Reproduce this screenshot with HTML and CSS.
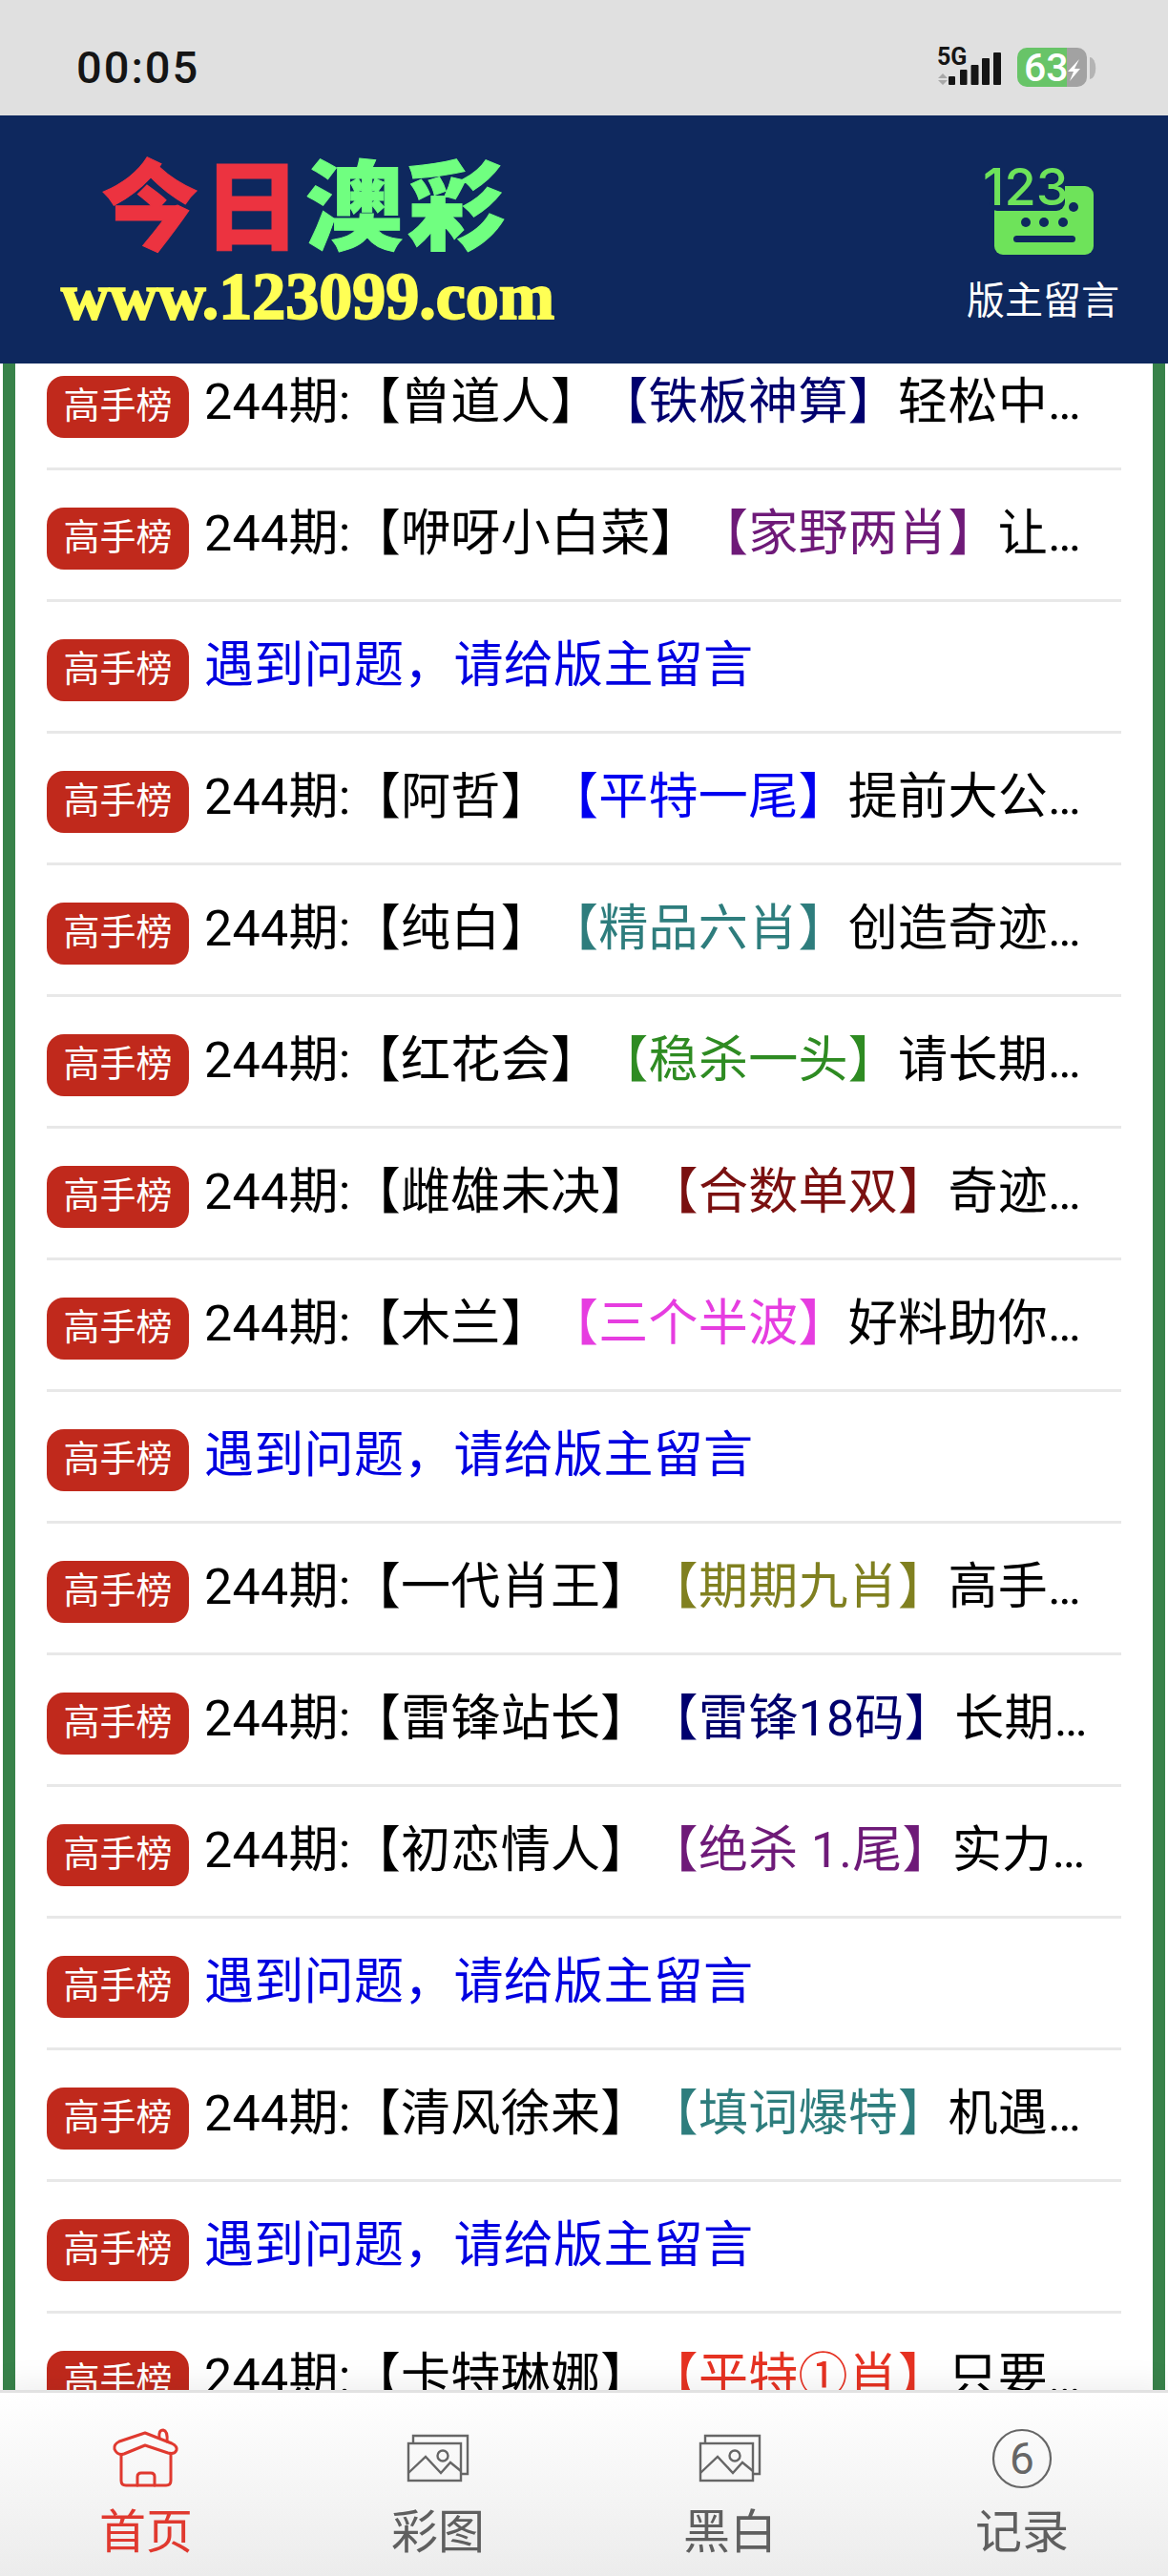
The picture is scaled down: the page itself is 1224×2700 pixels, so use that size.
FILE: index.html
```html
<!DOCTYPE html>
<html lang="zh-CN">
<head>
  <meta charset="UTF-8">
  <meta name="viewport" content="width=device-width, initial-scale=1.0">
  <title>今日澳彩</title>
  <link rel="stylesheet" href="styles.css">
</head>
<body>
  <div class="page">
    <div class="status-bar">
      <span class="time">00:05</span>
      <svg class="status-icons" width="170" height="50" viewBox="983 46 170 50">
        <text class="net-text" x="982" y="68">5G</text>
        <path d="M988 77l5 5h-10zM988 89l5-5h-10z" fill="#a8a8a8"/>
        <rect x="994" y="80" width="7" height="9" rx="1" fill="#151515"/>
        <rect x="1006" y="73" width="7.5" height="16" rx="1" fill="#151515"/>
        <rect x="1017.5" y="68" width="8" height="21" rx="1" fill="#151515"/>
        <rect x="1029" y="61" width="8" height="28" rx="1" fill="#151515"/>
        <rect x="1041" y="55" width="8" height="34" rx="1" fill="#151515"/>
        <path d="M1076 50h42v41h-42a10 10 0 0 1-10-10v-21a10 10 0 0 1 10-10z" fill="#68c468"/>
        <path d="M1118 50h11a10 10 0 0 1 10 10v21a10 10 0 0 1-10 10h-11z" fill="#a2a2a2"/>
        <path d="M1142 60a6 11 0 0 1 0 23z" fill="#b4b4b4"/>
        <text class="batt-text" x="1073" y="85">63</text>
        <path d="M1131 62l-12 13h6l-4 10 11-13h-6z" fill="#fff"/>
      </svg>
    </div>

    <header class="top">
      <div class="logo">
        <div class="logo-name"><span class="red">今日</span><span class="green">澳彩</span></div>
        <div class="logo-url">www.123099.com</div>
      </div>
      <a class="msg-link">
        <svg class="msg-icon" width="116" height="92" viewBox="1032 176 116 92">
          <rect x="1042" y="195" width="104" height="72" rx="9" fill="#6ee35a"/>
          <rect x="1036" y="170" width="80" height="51" rx="9" fill="#0e285e"/>
          <text class="kb-num" x="1030" y="215">123</text>
          <circle cx="1125" cy="217" r="5" fill="#0e285e"/>
          <circle cx="1075" cy="233" r="5" fill="#0e285e"/>
          <circle cx="1094" cy="233" r="5" fill="#0e285e"/>
          <circle cx="1114" cy="233" r="5" fill="#0e285e"/>
          <rect x="1062" y="247" width="65" height="7" rx="3.5" fill="#0e285e"/>
        </svg>
        <span class="msg-label">版主留言</span>
      </a>
    </header>

    <main class="list-wrap">
      <ul class="list">
        <li class="row"><span class="badge">高手榜</span><p class="txt">244期:【曾道人】<b class="navy">【铁板神算】</b>轻松中奖好运连连</p></li>
        <li class="row"><span class="badge">高手榜</span><p class="txt">244期:【咿呀小白菜】<b class="purple">【家野两肖】</b>让你赢钱不再难</p></li>
        <li class="row"><span class="badge">高手榜</span><p class="txt blue">遇到问题，请给版主留言</p></li>
        <li class="row"><span class="badge">高手榜</span><p class="txt">244期:【阿哲】<b class="pure-blue">【平特一尾】</b>提前大公开免费看</p></li>
        <li class="row"><span class="badge">高手榜</span><p class="txt">244期:【纯白】<b class="teal">【精品六肖】</b>创造奇迹赢大奖</p></li>
        <li class="row"><span class="badge">高手榜</span><p class="txt">244期:【红花会】<b class="green-t">【稳杀一头】</b>请长期关注本站</p></li>
        <li class="row"><span class="badge">高手榜</span><p class="txt">244期:【雌雄未决】<b class="maroon">【合数单双】</b>奇迹就在今天</p></li>
        <li class="row"><span class="badge">高手榜</span><p class="txt">244期:【木兰】<b class="magenta">【三个半波】</b>好料助你发大财</p></li>
        <li class="row"><span class="badge">高手榜</span><p class="txt blue">遇到问题，请给版主留言</p></li>
        <li class="row"><span class="badge">高手榜</span><p class="txt">244期:【一代肖王】<b class="olive">【期期九肖】</b>高手论坛精选</p></li>
        <li class="row"><span class="badge">高手榜</span><p class="txt">244期:【雷锋站长】<b class="navy">【雷锋18码】</b>长期跟踪必中</p></li>
        <li class="row"><span class="badge">高手榜</span><p class="txt">244期:【初恋情人】<b class="purple">【绝杀 1.尾】</b>实力派稳赚不赔</p></li>
        <li class="row"><span class="badge">高手榜</span><p class="txt blue">遇到问题，请给版主留言</p></li>
        <li class="row"><span class="badge">高手榜</span><p class="txt">244期:【清风徐来】<b class="teal">【填词爆特】</b>机遇就在眼前</p></li>
        <li class="row"><span class="badge">高手榜</span><p class="txt blue">遇到问题，请给版主留言</p></li>
        <li class="row"><span class="badge">高手榜</span><p class="txt">244期:【卡特琳娜】<b class="red-t">【平特①肖】</b>只要跟上就能赢</p></li>
      </ul>
    </main>

    <nav class="tabs">
      <a class="tab active">
        <svg width="120" height="90" viewBox="-7 0 120 90" fill="none" stroke="#e0392f" stroke-width="3" stroke-linejoin="round" stroke-linecap="round">
          <path d="M52 20L80 31Q86 34 85 38Q83 43 76 41L52 33L30 42Q23 44 20 37Q19 32 25 29Z"/>
          <path d="M27 43V70Q27 75 32 75H74Q79 75 79 70V42"/>
          <path d="M44 75V66Q44 62 48 62H58Q62 62 62 66V75"/>
          <path d="M67 25Q66 17 71 17Q76 18 75 29"/>
        </svg>
        <span>首页</span>
      </a>
      <a class="tab">
        <svg width="120" height="90" viewBox="-1 0 120 90" fill="none" stroke="#666" stroke-width="2.4">
          <path d="M33 31V23H90V63H84"/>
          <rect x="28" y="31" width="55" height="39"/>
          <circle cx="64" cy="44" r="5.5"/>
          <path d="M28 62L46 45L62 62L72 51L83 60"/>
        </svg>
        <span>彩图</span>
      </a>
      <a class="tab">
        <svg width="120" height="90" viewBox="-1 0 120 90" fill="none" stroke="#666" stroke-width="2.4">
          <path d="M33 31V23H90V63H84"/>
          <rect x="28" y="31" width="55" height="39"/>
          <circle cx="64" cy="44" r="5.5"/>
          <path d="M28 62L46 45L62 62L72 51L83 60"/>
        </svg>
        <span>黑白</span>
      </a>
      <a class="tab">
        <svg width="120" height="90" viewBox="0 0 120 90" fill="none" stroke="#666" stroke-width="2.2">
          <circle cx="60" cy="47" r="30"/>
          <text class="six" x="60" y="63">6</text>
        </svg>
        <span>记录</span>
      </a>
    </nav>
  </div>
</body>
</html>
```
FILE: styles.css
```css
* {
  box-sizing: border-box;
}
body {
  margin: 0;
  background: #fff;
  font-family: "Noto Sans CJK SC", "Noto Sans", sans-serif;
}
.page {
  width: 1224px;
  height: 2700px;
  display: flex;
  flex-direction: column;
  overflow: hidden;
}

/* status bar */
.status-bar {
  height: 121px;
  background: #e0e0e0;
  display: flex;
  justify-content: space-between;
  padding: 46px 71px 0 80px;
}
.time {
  font-family: Roboto, sans-serif;
  font-size: 47px;
  font-weight: 500;
  line-height: 50px;
  letter-spacing: 2px;
  color: #151515;
}
.net-text {
  font-family: Roboto, sans-serif;
  font-size: 25px;
  font-weight: 700;
  fill: #151515;
}
.batt-text {
  font-family: Roboto, sans-serif;
  font-size: 41px;
  font-weight: 500;
  fill: #fff;
}

/* header */
.top {
  height: 260px;
  background: #0e285e;
  display: flex;
  justify-content: space-between;
  padding: 0 51px 0 61px;
  position: relative;
  z-index: 2;
}
.logo {
  padding-top: 33px;
  filter: blur(0.5px);
}
.logo-name {
  font-size: 102px;
  font-weight: 900;
  line-height: 112px;
  letter-spacing: 5px;
  padding-left: 45px;
  -webkit-text-stroke: 1px currentColor;
}
.red {
  color: #ec3340;
}
.green {
  color: #70ff80;
}
.logo-url {
  margin-top: 7px;
  padding-left: 3px;
  font-family: "Liberation Serif", serif;
  font-size: 70px;
  font-weight: 700;
  line-height: 76px;
  color: #ffff55;
  -webkit-text-stroke: 2px #ffff55;
}
.msg-link {
  display: flex;
  flex-direction: column;
  align-items: center;
  padding-top: 55px;
}
.msg-icon {
  margin-right: 6px;
}
.kb-num {
  font-family: Inter, sans-serif;
  font-size: 54px;
  font-weight: 500;
  fill: #6ee35a;
}
.msg-label {
  margin-top: 15px;
  font-size: 40px;
  line-height: 58px;
  color: #fff;
}

/* list */
.list-wrap {
  flex: 1;
  min-height: 0;
  overflow: hidden;
  margin: 0 3px;
  border-left: 13px solid #38824a;
  border-right: 13px solid #38824a;
  background: #fff;
  padding: 0 33px;
}
.list {
  list-style: none;
  margin: -26px 0 0;
  padding: 0;
}
.row {
  height: 138px;
  display: flex;
  align-items: flex-start;
  padding-top: 39px;
  border-bottom: 3px solid #e8e8e8;
}
.badge {
  flex: none;
  width: 149px;
  height: 65px;
  margin-right: 16px;
  border-radius: 18px;
  background: #c0291c;
  color: #fff;
  font-size: 38px;
  line-height: 55px;
  text-align: center;
}
.txt {
  flex: 1;
  min-width: 0;
  margin: -7px 25px 0 0;
  font-family: Roboto, "Noto Sans CJK SC", sans-serif;
  font-size: 52px;
  line-height: 70px;
  letter-spacing: 0.3px;
  color: #000;
  white-space: nowrap;
  overflow: hidden;
  text-overflow: ellipsis;
}
.txt b {
  font-weight: 400;
  margin-left: 24px;
}
.blue {
  color: #0000e0;
}
.navy {
  color: #00006e;
}
.purple {
  color: #6e1a78;
}
.pure-blue {
  color: #0000f0;
}
.teal {
  color: #2e7d7d;
}
.green-t {
  color: #2e8b22;
}
.maroon {
  color: #7a1010;
}
.magenta {
  color: #e63de0;
}
.olive {
  color: #808020;
}
.red-t {
  color: #e63222;
}

/* bottom tabs */
.tabs {
  height: 195px;
  flex: none;
  display: grid;
  grid-template-columns: repeat(4, 306px);
  border-top: 3px solid #e2e2e2;
  background: linear-gradient(#fff, #ececec);
  box-shadow: 0 -6px 30px rgba(0, 0, 0, 0.07);
  position: relative;
  z-index: 1;
}
.tab {
  display: flex;
  flex-direction: column;
  align-items: center;
  padding-top: 22px;
  color: #5f5f5f;
  font-size: 49px;
  line-height: 70px;
}
.tab.active {
  color: #e0392f;
}
.tab span {
  margin-top: -5px;
}
.six {
  font-family: Roboto, sans-serif;
  font-size: 46px;
  fill: #666;
  stroke: none;
  text-anchor: middle;
}
```
